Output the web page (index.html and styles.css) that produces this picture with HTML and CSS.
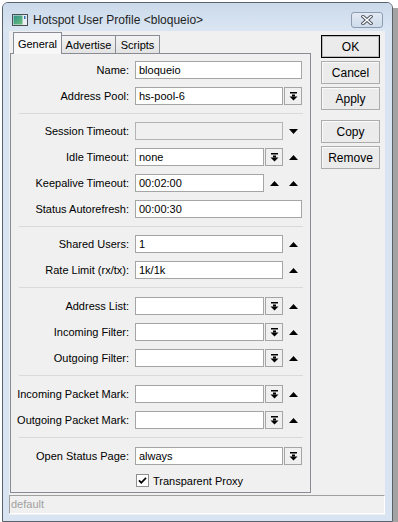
FILE: index.html
```html
<!DOCTYPE html>
<html lang="en">
<head>
  <meta charset="UTF-8">
  <title>Hotspot User Profile</title>
  <link rel="stylesheet" href="styles.css">
</head>
<body>
  <div class="screen">
    <div class="window">
      <div class="titlebar">
        <svg class="app-icon" width="16" height="12" viewBox="0 0 16 12">
          <defs>
            <linearGradient id="scr" x1="0" y1="0" x2="1" y2="1">
              <stop offset="0" stop-color="#2f8f8a"/>
              <stop offset="1" stop-color="#6cc07a"/>
            </linearGradient>
          </defs>
          <rect x="0.5" y="0.5" width="15" height="11" fill="#e8eef4" stroke="#4a4f55"/>
          <rect x="1.5" y="1.5" width="9" height="9" fill="url(#scr)"/>
          <rect x="12" y="2" width="1.5" height="3" fill="#2d6fb0"/>
        </svg>
        <span class="title">Hotspot User Profile &lt;bloqueio&gt;</span>
        <div class="close-btn">
          <svg width="12" height="10" viewBox="0 0 12 10">
            <path d="M2 1.5 L10 8.5 M10 1.5 L2 8.5" stroke="#4d5560" stroke-width="3.4" stroke-linecap="square"/>
            <path d="M2 1.5 L10 8.5 M10 1.5 L2 8.5" stroke="#fff" stroke-width="1.5" stroke-linecap="square"/>
          </svg>
        </div>
      </div>

      <div class="client">
        <div class="main">
          <div class="tabs-area">
            <div class="tabs">
              <div class="tab active tab-general">General</div>
              <div class="tab tab-advertise">Advertise</div>
              <div class="tab tab-scripts">Scripts</div>
            </div>
            <div class="panel">
              <div class="group">
                <div class="row">
                  <span class="lbl">Name:</span>
                  <div class="field"><div class="input">bloqueio</div></div>
                </div>
                <div class="row">
                  <span class="lbl">Address Pool:</span>
                  <div class="field">
                    <div class="input">hs-pool-6</div>
                    <div class="dd"><svg width="9" height="9" viewBox="0 0 9 9"><rect x="1" y="0" width="7" height="1.5" fill="#000"/><rect x="3" y="2.5" width="3" height="2" fill="#000"/><polygon points="0.5,4.5 8.5,4.5 4.5,8.5" fill="#000"/></svg></div>
                  </div>
                </div>
              </div>
              <div class="sep"></div>
              <div class="group">
                <div class="row">
                  <span class="lbl">Session Timeout:</span>
                  <div class="field">
                    <div class="input disabled"></div>
                    <div class="slot"><svg width="9" height="5" viewBox="0 0 9 5"><polygon points="0,0 9,0 4.5,5" fill="#000"/></svg></div>
                  </div>
                </div>
                <div class="row">
                  <span class="lbl">Idle Timeout:</span>
                  <div class="field">
                    <div class="input">none</div>
                    <div class="dd"><svg width="9" height="9" viewBox="0 0 9 9"><rect x="1" y="0" width="7" height="1.5" fill="#000"/><rect x="3" y="2.5" width="3" height="2" fill="#000"/><polygon points="0.5,4.5 8.5,4.5 4.5,8.5" fill="#000"/></svg></div>
                    <div class="slot"><svg width="9" height="5" viewBox="0 0 9 5"><polygon points="0,5 9,5 4.5,0" fill="#000"/></svg></div>
                  </div>
                </div>
                <div class="row">
                  <span class="lbl">Keepalive Timeout:</span>
                  <div class="field">
                    <div class="input">00:02:00</div>
                    <div class="slot"><svg width="9" height="5" viewBox="0 0 9 5"><polygon points="0,5 9,5 4.5,0" fill="#000"/></svg></div>
                    <div class="slot"><svg width="9" height="5" viewBox="0 0 9 5"><polygon points="0,5 9,5 4.5,0" fill="#000"/></svg></div>
                  </div>
                </div>
                <div class="row">
                  <span class="lbl">Status Autorefresh:</span>
                  <div class="field"><div class="input">00:00:30</div></div>
                </div>
              </div>
              <div class="sep"></div>
              <div class="group">
                <div class="row">
                  <span class="lbl">Shared Users:</span>
                  <div class="field">
                    <div class="input">1</div>
                    <div class="slot"><svg width="9" height="5" viewBox="0 0 9 5"><polygon points="0,5 9,5 4.5,0" fill="#000"/></svg></div>
                  </div>
                </div>
                <div class="row">
                  <span class="lbl">Rate Limit (rx/tx):</span>
                  <div class="field">
                    <div class="input">1k/1k</div>
                    <div class="slot"><svg width="9" height="5" viewBox="0 0 9 5"><polygon points="0,5 9,5 4.5,0" fill="#000"/></svg></div>
                  </div>
                </div>
              </div>
              <div class="sep wide"></div>
              <div class="group">
                <div class="row">
                  <span class="lbl">Address List:</span>
                  <div class="field">
                    <div class="input"></div>
                    <div class="dd"><svg width="9" height="9" viewBox="0 0 9 9"><rect x="1" y="0" width="7" height="1.5" fill="#000"/><rect x="3" y="2.5" width="3" height="2" fill="#000"/><polygon points="0.5,4.5 8.5,4.5 4.5,8.5" fill="#000"/></svg></div>
                    <div class="slot"><svg width="9" height="5" viewBox="0 0 9 5"><polygon points="0,5 9,5 4.5,0" fill="#000"/></svg></div>
                  </div>
                </div>
                <div class="row">
                  <span class="lbl">Incoming Filter:</span>
                  <div class="field">
                    <div class="input"></div>
                    <div class="dd"><svg width="9" height="9" viewBox="0 0 9 9"><rect x="1" y="0" width="7" height="1.5" fill="#000"/><rect x="3" y="2.5" width="3" height="2" fill="#000"/><polygon points="0.5,4.5 8.5,4.5 4.5,8.5" fill="#000"/></svg></div>
                    <div class="slot"><svg width="9" height="5" viewBox="0 0 9 5"><polygon points="0,5 9,5 4.5,0" fill="#000"/></svg></div>
                  </div>
                </div>
                <div class="row">
                  <span class="lbl">Outgoing Filter:</span>
                  <div class="field">
                    <div class="input"></div>
                    <div class="dd"><svg width="9" height="9" viewBox="0 0 9 9"><rect x="1" y="0" width="7" height="1.5" fill="#000"/><rect x="3" y="2.5" width="3" height="2" fill="#000"/><polygon points="0.5,4.5 8.5,4.5 4.5,8.5" fill="#000"/></svg></div>
                    <div class="slot"><svg width="9" height="5" viewBox="0 0 9 5"><polygon points="0,5 9,5 4.5,0" fill="#000"/></svg></div>
                  </div>
                </div>
              </div>
              <div class="sep wide"></div>
              <div class="group">
                <div class="row">
                  <span class="lbl">Incoming Packet Mark:</span>
                  <div class="field">
                    <div class="input"></div>
                    <div class="dd"><svg width="9" height="9" viewBox="0 0 9 9"><rect x="1" y="0" width="7" height="1.5" fill="#000"/><rect x="3" y="2.5" width="3" height="2" fill="#000"/><polygon points="0.5,4.5 8.5,4.5 4.5,8.5" fill="#000"/></svg></div>
                    <div class="slot"><svg width="9" height="5" viewBox="0 0 9 5"><polygon points="0,5 9,5 4.5,0" fill="#000"/></svg></div>
                  </div>
                </div>
                <div class="row">
                  <span class="lbl">Outgoing Packet Mark:</span>
                  <div class="field">
                    <div class="input"></div>
                    <div class="dd"><svg width="9" height="9" viewBox="0 0 9 9"><rect x="1" y="0" width="7" height="1.5" fill="#000"/><rect x="3" y="2.5" width="3" height="2" fill="#000"/><polygon points="0.5,4.5 8.5,4.5 4.5,8.5" fill="#000"/></svg></div>
                    <div class="slot"><svg width="9" height="5" viewBox="0 0 9 5"><polygon points="0,5 9,5 4.5,0" fill="#000"/></svg></div>
                  </div>
                </div>
              </div>
              <div class="sep wide"></div>
              <div class="group">
                <div class="row">
                  <span class="lbl">Open Status Page:</span>
                  <div class="field">
                    <div class="input">always</div>
                    <div class="dd"><svg width="9" height="9" viewBox="0 0 9 9"><rect x="1" y="0" width="7" height="1.5" fill="#000"/><rect x="3" y="2.5" width="3" height="2" fill="#000"/><polygon points="0.5,4.5 8.5,4.5 4.5,8.5" fill="#000"/></svg></div>
                  </div>
                </div>
                <div class="row check-row">
                  <span class="lbl"></span>
                  <div class="check">
                    <svg width="13" height="13" viewBox="0 0 13 13"><rect x="0.5" y="0.5" width="12" height="12" fill="#fff" stroke="#8e8f8f"/><path d="M3 6.3 L5.3 8.8 L10 3.8" fill="none" stroke="#000" stroke-width="1.8"/></svg>
                    <span>Transparent Proxy</span>
                  </div>
                </div>
              </div>
            </div>
          </div>

          <div class="actions">
            <button class="btn default">OK</button>
            <button class="btn">Cancel</button>
            <button class="btn">Apply</button>
            <button class="btn spaced">Copy</button>
            <button class="btn">Remove</button>
          </div>
        </div>
        <div class="statusbar">default</div>
      </div>
    </div>
    <div class="backdrop"></div>
  </div>
</body>
</html>
```

FILE: styles.css
```css
* {
  box-sizing: border-box;
}

body {
  margin: 0;
  font-family: "Liberation Sans", Arial, sans-serif;
  font-size: 11px;
  color: #000;
  background-color: #fff;
}

.screen {
  display: flex;
  width: 398px;
  height: 522px;
  overflow: hidden;
}

.window {
  flex-shrink: 0;
  width: 391px;
  height: 520px;
  margin: 2px 0 0 2px;
  border: 1px solid #59616b;
  border-radius: 6px 6px 0 0;
  background-color: #d8e4f1;
  display: flex;
  flex-direction: column;
}

.backdrop {
  flex: 1;
  margin-top: 8px;
  background-color: #a3a3a3;
}

/* title bar */
.titlebar {
  height: 28px;
  padding: 5px 9px 0 9px;
  display: flex;
  align-items: center;
  border-radius: 5px 5px 0 0;
  background: linear-gradient(#cbd9ea, #dbe6f3);
}

.title {
  margin-left: 5px;
  font-size: 12px;
  color: #1f1f1f;
}

.close-btn {
  margin-left: auto;
  width: 32px;
  height: 16px;
  border: 1px solid #8d9cae;
  border-radius: 3px;
  background: linear-gradient(#e2eaf4, #cfdbea);
  display: flex;
  align-items: center;
  justify-content: center;
}

/* client area */
.client {
  flex: 1;
  margin: 0 7px 6px 6px;
  background-color: #f0f0f0;
  display: flex;
  flex-direction: column;
}

.main {
  flex: 1;
  display: flex;
}

.tabs-area {
  width: 301px;
  margin: 1px 0 2px 1px;
  display: flex;
  flex-direction: column;
}

.tabs {
  height: 21px;
  padding-left: 3px;
  display: flex;
  align-items: flex-end;
}

.tab {
  height: 18px;
  margin-right: -1px;
  border: 1px solid #898c95;
  border-bottom: none;
  background: linear-gradient(#f3f3f3, #e3e3e3);
  display: flex;
  align-items: center;
  justify-content: center;
}

.tab.active {
  position: relative;
  z-index: 1;
  height: 22px;
  margin-bottom: -1px;
  background: #f7f7f7;
}

.tab-general { width: 49px; }
.tab-advertise { width: 55px; }
.tab-scripts { width: 45px; }

.panel {
  flex: 1;
  border: 1px solid #898c95;
  padding: 7px 7px 0 0;
}

.group {
  display: flex;
  flex-direction: column;
  gap: 8px;
}

.sep {
  height: 1px;
  margin: 8px 0 8px 8px;
  background-color: #d9d9d9;
}

.sep.wide {
  margin-bottom: 9px;
}

.row {
  height: 18px;
  display: flex;
  align-items: center;
}

.check-row {
  align-items: flex-start;
}

.lbl {
  width: 118px;
  margin-right: 6px;
  text-align: right;
  white-space: nowrap;
}

.field {
  width: 167px;
  height: 18px;
  display: flex;
  gap: 1px;
}

.input {
  flex: 1;
  height: 18px;
  padding-left: 3px;
  border: 1px solid #a5a5a5;
  background-color: #fff;
  line-height: 16px;
  white-space: nowrap;
}

.input.disabled {
  background-color: #f0f0f0;
  border-color: #b4b4b4;
}

.dd {
  width: 18px;
  height: 18px;
  border: 1px solid #a5a5a5;
  background-color: #f0f0f0;
  display: flex;
  align-items: center;
  justify-content: center;
}

.slot {
  width: 18px;
  height: 18px;
  display: flex;
  align-items: center;
  justify-content: center;
}

.check {
  display: flex;
  align-items: center;
  gap: 4px;
  padding: 1px 0 0 1px;
}

/* right buttons */
.actions {
  margin-left: 10px;
  padding-top: 4px;
  display: flex;
  flex-direction: column;
}

.btn {
  width: 59px;
  height: 23px;
  margin-bottom: 3px;
  padding: 0;
  font-family: "Liberation Sans", Arial, sans-serif;
  font-size: 12px;
  color: #000;
  border: 1px solid #acacac;
  background-color: #ebebeb;
  box-shadow: inset 1px 1px 0 #fafafa;
}

.btn.default {
  border-color: #000;
  box-shadow: inset 0 0 0 1px #b8b8b8;
}

.btn.spaced {
  margin-top: 7px;
}

.statusbar {
  height: 19px;
  margin-bottom: 1px;
  padding-left: 1px;
  border-top: 1px solid #a0a0a0;
  border-left: 1px solid #a0a0a0;
  border-right: 1px solid #fff;
  border-bottom: 1px solid #fff;
  color: #a0a0a0;
  line-height: 17px;
}
```
